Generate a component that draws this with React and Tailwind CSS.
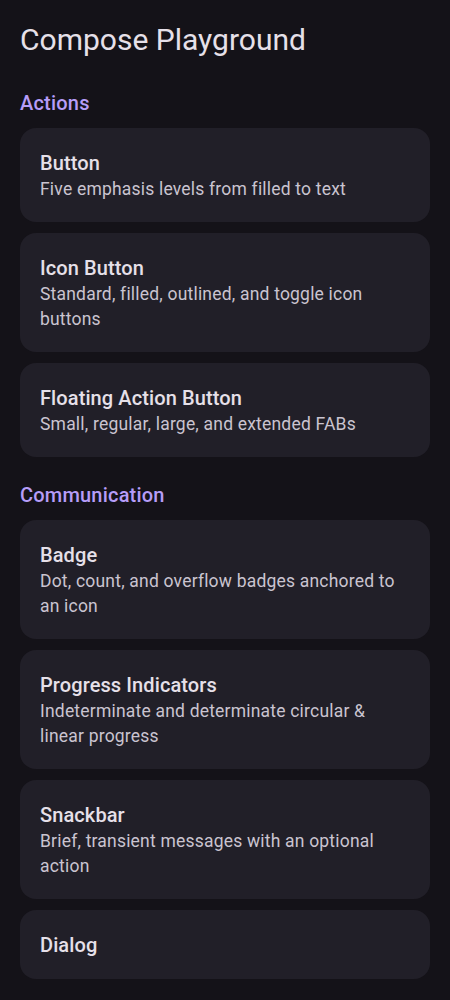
const sections = [
  {
    title: "Actions",
    items: [
      { name: "Button", desc: "Five emphasis levels from filled to text" },
      {
        name: "Icon Button",
        desc: "Standard, filled, outlined, and toggle icon buttons",
      },
      {
        name: "Floating Action Button",
        desc: "Small, regular, large, and extended FABs",
      },
    ],
  },
  {
    title: "Communication",
    items: [
      {
        name: "Badge",
        desc: "Dot, count, and overflow badges anchored to an icon",
      },
      {
        name: "Progress Indicators",
        desc: "Indeterminate and determinate circular & linear progress",
      },
      {
        name: "Snackbar",
        desc: "Brief, transient messages with an optional action",
      },
      { name: "Dialog" },
    ],
  },
]

const Card = ({ name, desc }) => {
  return (
    <div className="w-full rounded-[16px] bg-[#211f28] px-5 pt-[21px] pb-[20px]">
      <div className="text-[20px] leading-[28px] font-medium tracking-[0.1px] text-[#e6e0e9]">
        {name}
      </div>
      {desc && (
        <div className="text-[17.5px] leading-[25px] tracking-[0.2px] text-[#cac4d0]">
          {desc}
        </div>
      )}
    </div>
  )
}

const App = () => {
  return (
    <div
      className="min-h-[1000px] w-full bg-[#141218] px-5 pt-5"
      style={{ fontFamily: "Roboto, 'Noto Sans', sans-serif" }}
    >
      <h1 className="pb-[5px] text-[30px] leading-[40px] text-[#e6e0e9]">
        Compose Playground
      </h1>
      {sections.map((s) => (
        <div key={s.title}>
          <div className="pt-[26px] pb-[13px] text-[20px] leading-[24px] font-medium tracking-[0.2px] text-[#b69df8]">
            {s.title}
          </div>
          <div className="flex flex-col gap-[11px]">
            {s.items.map((it) => (
              <Card key={it.name} {...it} />
            ))}
          </div>
        </div>
      ))}
    </div>
  )
}

export default App
